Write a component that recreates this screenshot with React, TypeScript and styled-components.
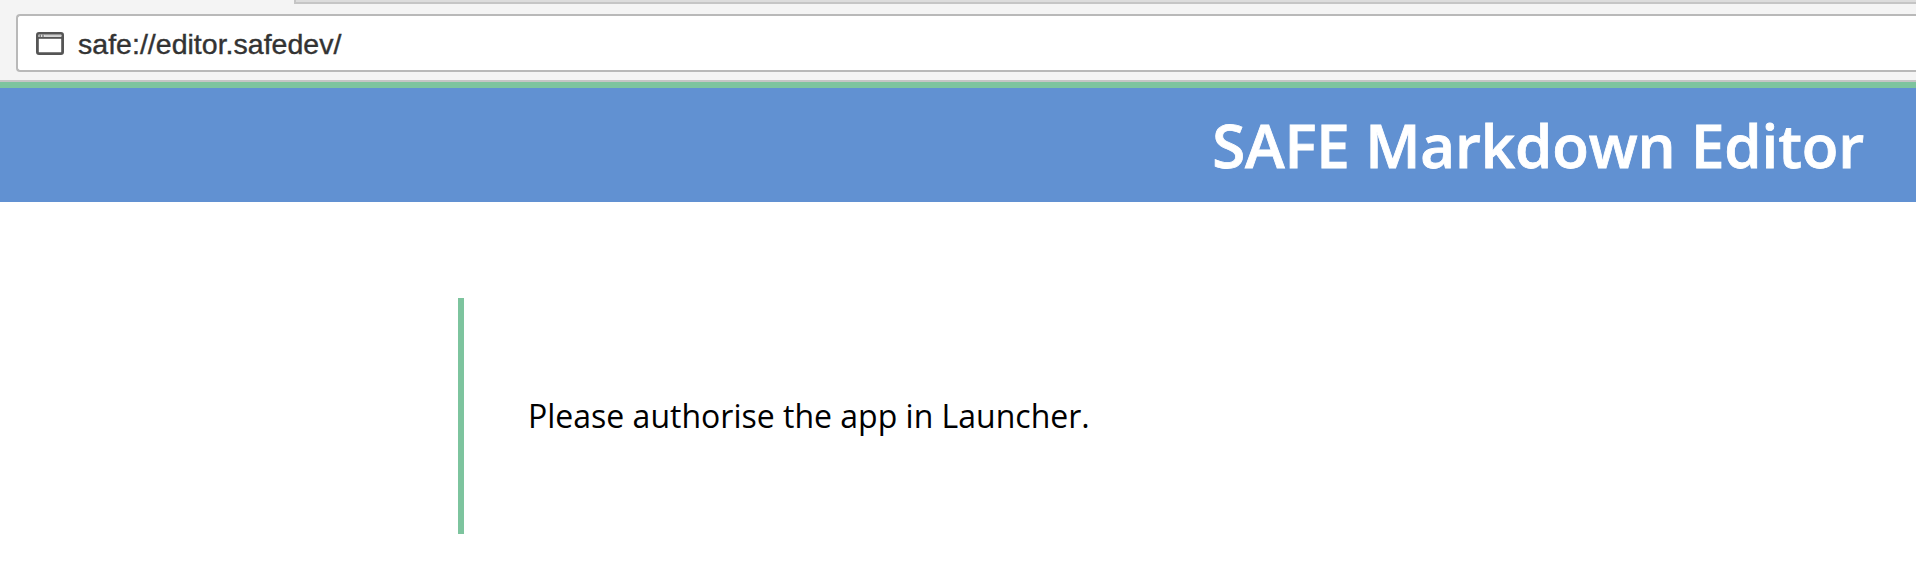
import React from "react";
import styled, { createGlobalStyle } from "styled-components";

const GlobalStyle = createGlobalStyle`
  *, *::before, *::after { box-sizing: border-box; }
  body { margin: 0; background: #fff; overflow: hidden; }
`;

const Page = styled.div`
  display: flex;
  flex-direction: column;
  width: 100%;
  height: 572px;
  overflow: hidden;
  font-family: "Open Sans", sans-serif;
`;

const Chrome = styled.div`
  height: 82px;
  background: #f4f4f4;
  border-bottom: 2px solid #c5c5c5;
`;

const TabStrip = styled.div`
  height: 4px;
  margin-left: 294px;
  background: #dcdcdc;
  border-left: 2px solid #c5c5c5;
  border-bottom: 2px solid #c5c5c5;
`;

const AddressBar = styled.div`
  display: flex;
  align-items: center;
  height: 58px;
  margin: 10px 0 0 16px;
  padding-left: 18px;
  background: #fff;
  border: 2px solid #b9b9b9;
  border-right: 0;
  border-radius: 4px 0 0 4px;
`;

const Url = styled.span`
  margin-left: 14px;
  padding-top: 2px;
  font: 28.5px/32px "Liberation Sans", Arial, sans-serif;
  letter-spacing: 0.02px;
  color: #333;
  -webkit-text-stroke: 0.4px #333;
  white-space: nowrap;
`;

const Header = styled.header`
  display: flex;
  align-items: center;
  justify-content: flex-end;
  height: 120px;
  padding-right: 52px;
  background: #6191d2;
  border-top: 6px solid #7dc49e;
`;

const Title = styled.h1`
  margin: 0;
  font-size: 60px;
  font-weight: 600;
  line-height: 84px;
  letter-spacing: -0.13px;
  color: #fff;
  -webkit-text-stroke: 0.8px #fff;
  white-space: nowrap;
`;

const Notice = styled.main`
  margin: 96px 0 0 458px;
  padding: 96px 64px;
  border-left: 6px solid #7dc49e;
`;

const Message = styled.p`
  margin: 0;
  font-size: 32px;
  line-height: 44px;
  color: #000;
`;

const WindowIcon = () => (
  <svg width="28" height="23" viewBox="0 0 28 23" fill="none">
    <rect x="1.4" y="1.4" width="25.2" height="20.2" rx="1.6" stroke="#555" strokeWidth="2.8" />
    <path d="M2 5.8H26" stroke="#555" strokeWidth="2" />
    <path d="M2.5 3.8H8.5" stroke="#ddd" strokeWidth="2.4" />
    <path d="M8.5 3.6H25.5" stroke="#ccc" strokeWidth="1.8" />
    <path d="M4.2 2.5V5.5M7 2.5V5.5" stroke="#666" strokeWidth="1.2" />
  </svg>
);

export default function App() {
  return (
    <>
      <GlobalStyle />
      <Page>
        <Chrome>
          <TabStrip />
          <AddressBar>
            <WindowIcon />
            <Url>safe://editor.safedev/</Url>
          </AddressBar>
        </Chrome>
        <Header>
          <Title>SAFE Markdown Editor</Title>
        </Header>
        <Notice>
          <Message>Please authorise the app in Launcher.</Message>
        </Notice>
      </Page>
    </>
  );
}
